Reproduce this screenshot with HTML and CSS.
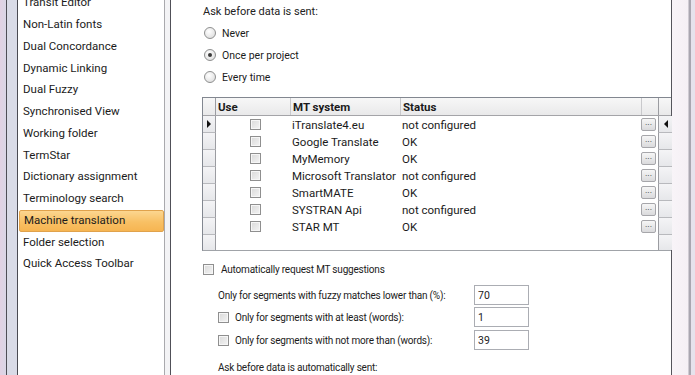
FILE: index.html
```html
<!DOCTYPE html>
<html lang="en">
<head>
  <meta charset="UTF-8" />
  <title>Options - Machine translation</title>
  <link rel="stylesheet" href="styles.css">
</head>
<body>
  <div class="window">
    <div class="frame-left"></div>
    <div class="gutter"></div>

    <div class="nav">
      <ul class="nav-list">
        <li>Transit Editor</li>
        <li>Non-Latin fonts</li>
        <li>Dual Concordance</li>
        <li>Dynamic Linking</li>
        <li>Dual Fuzzy</li>
        <li>Synchronised View</li>
        <li>Working folder</li>
        <li>TermStar</li>
        <li>Dictionary assignment</li>
        <li>Terminology search</li>
        <li class="active">Machine translation</li>
        <li>Folder selection</li>
        <li>Quick Access Toolbar</li>
      </ul>
    </div>

    <div class="nav-gap"></div>

    <div class="panel">
      <div class="label">Ask before data is sent:</div>
      <div class="radios">
        <label class="radio"><span class="radio-box"></span>Never</label>
        <label class="radio"><span class="radio-box checked"></span>Once per project</label>
        <label class="radio"><span class="radio-box"></span>Every time</label>
      </div>

      <div class="grid">
        <div class="grid-row grid-head">
          <div class="row-head"></div>
          <div class="cell">Use</div>
          <div class="cell sep">MT system</div>
          <div class="cell sep">Status</div>
          <div class="cell sep"></div>
          <div class="row-tail"></div>
        </div>

        <div class="grid-row">
          <div class="row-head current"></div>
          <div class="cell center"><span class="check"></span></div>
          <div class="cell">iTranslate4.eu</div>
          <div class="cell">not configured</div>
          <div class="cell"><span class="dots">...</span></div>
          <div class="row-tail current"></div>
        </div>
        <div class="grid-row">
          <div class="row-head"></div>
          <div class="cell center"><span class="check"></span></div>
          <div class="cell">Google Translate</div>
          <div class="cell">OK</div>
          <div class="cell"><span class="dots">...</span></div>
          <div class="row-tail"></div>
        </div>
        <div class="grid-row">
          <div class="row-head"></div>
          <div class="cell center"><span class="check"></span></div>
          <div class="cell">MyMemory</div>
          <div class="cell">OK</div>
          <div class="cell"><span class="dots">...</span></div>
          <div class="row-tail"></div>
        </div>
        <div class="grid-row">
          <div class="row-head"></div>
          <div class="cell center"><span class="check"></span></div>
          <div class="cell">Microsoft Translator</div>
          <div class="cell">not configured</div>
          <div class="cell"><span class="dots">...</span></div>
          <div class="row-tail"></div>
        </div>
        <div class="grid-row">
          <div class="row-head"></div>
          <div class="cell center"><span class="check"></span></div>
          <div class="cell">SmartMATE</div>
          <div class="cell">OK</div>
          <div class="cell"><span class="dots">...</span></div>
          <div class="row-tail"></div>
        </div>
        <div class="grid-row">
          <div class="row-head"></div>
          <div class="cell center"><span class="check"></span></div>
          <div class="cell">SYSTRAN Api</div>
          <div class="cell">not configured</div>
          <div class="cell"><span class="dots">...</span></div>
          <div class="row-tail"></div>
        </div>
        <div class="grid-row">
          <div class="row-head"></div>
          <div class="cell center"><span class="check"></span></div>
          <div class="cell">STAR MT</div>
          <div class="cell">OK</div>
          <div class="cell"><span class="dots">...</span></div>
          <div class="row-tail"></div>
        </div>

        <div class="grid-row grid-fill">
          <div class="row-head"></div>
          <div class="cell"></div>
          <div class="cell"></div>
          <div class="cell"></div>
          <div class="cell"></div>
          <div class="row-tail"></div>
        </div>
      </div>

      <label class="auto"><span class="check"></span>Automatically request MT suggestions</label>

      <div class="opt-row fuzzy">
        <span class="opt-text">Only for segments with fuzzy matches lower than (%):</span>
        <input class="field" type="text" value="70" readonly>
      </div>
      <div class="opt-row words">
        <label class="opt-text"><span class="check"></span>Only for segments with at least (words):</label>
        <input class="field" type="text" value="1" readonly>
      </div>
      <div class="opt-row most">
        <label class="opt-text"><span class="check"></span>Only for segments with not more than (words):</label>
        <input class="field" type="text" value="39" readonly>
      </div>

      <div class="label sub">Ask before data is automatically sent:</div>
    </div>

    <div class="frame-right"></div>
  </div>
</body>
</html>
```

FILE: styles.css
```css
body {
  margin: 0;
  font-family: Roboto, "Liberation Sans", Arial, sans-serif;
  color: #1b1b1b;
  background: #fff;
}
.window {
  display: flex;
  height: 375px;
  width: 695px;
  overflow: hidden;
}
.frame-left {
  width: 6px;
  background: linear-gradient(90deg, #e2d2e4, #d9d6e6);
  border-right: 1px solid #4e4e56;
}
.gutter {
  width: 10px;
  background: #d9dbe7;
  border-right: 1px solid #4a4a52;
}
.nav {
  width: 146px;
  background: #fff;
  border-right: 1px solid #a9a9ad;
}
.nav-list {
  list-style: none;
  margin: -7.6px 0 0;
  padding: 0;
  font-size: 11.5px;
}
.nav-list li {
  height: 21.75px;
  line-height: 21.75px;
  padding-left: 5px;
  white-space: nowrap;
}
.nav-list li.active {
  box-sizing: border-box;
  margin: 0 0 0 1px;
  padding-left: 4px;
  border: 1px solid #e0a24c;
  border-radius: 2px;
  line-height: 19.75px;
  background: linear-gradient(180deg, #fcd690, #f8c064 55%, #f6b552);
}
.nav-gap {
  width: 5px;
  background: #f3f3f5;
  border-right: 1px solid #505058;
}
.panel {
  width: 501px;
  padding-left: 31px;
  box-sizing: border-box;
  display: flex;
  flex-direction: column;
  border-right: 1px solid #55555c;
  font-size: 10px;
  letter-spacing: -0.2px;
}
.panel > * {
  flex: none;
}
.label {
  height: 22px;
  line-height: 22px;
  padding: 1px 0 0 1px;
  box-sizing: border-box;
  color: #222;
  font-size: 11px;
  letter-spacing: 0;
}
.radio {
  display: flex;
  align-items: center;
  height: 22px;
  padding-left: 2px;
  font-size: 10.5px;
  letter-spacing: 0;
}
.radio-box {
  box-sizing: border-box;
  width: 12px;
  height: 12px;
  margin-right: 6px;
  border: 1px solid #8e8f8f;
  border-radius: 50%;
  background: radial-gradient(circle at 40% 35%, #ffffff, #e3e3e3 70%, #d4d4d4);
  display: flex;
  align-items: center;
  justify-content: center;
}
.radio-box.checked::after {
  content: "";
  width: 4px;
  height: 4px;
  border-radius: 50%;
  background: #3a3a3a;
}
.check {
  display: inline-block;
  box-sizing: border-box;
  width: 11px;
  height: 11px;
  border: 1px solid #8f8f8f;
  background: linear-gradient(135deg, #d9d9d9, #f4f4f4);
  box-shadow: inset 0 0 0 1px #f6f6f6;
  flex: none;
}
.grid {
  margin-top: 9px;
  height: 154px;
  box-sizing: border-box;
  border-top: 1px solid #828790;
  border-left: 1px solid #828790;
  border-bottom: 1px solid #a0a3a8;
  display: flex;
  flex-direction: column;
  font-size: 11.5px;
  letter-spacing: 0;
}
.grid-row {
  display: grid;
  grid-template-columns: 13px 74px 110px 241px 17px 14px;
  height: 17px;
  flex: none;
}
.grid-head {
  height: 18px;
  font-weight: bold;
  background: linear-gradient(180deg, #f7f7f7, #e9e9ea);
  border-bottom: 1px solid #a4a4a8;
  box-sizing: border-box;
}
.grid-fill {
  flex: 1;
}
.cell {
  display: flex;
  align-items: center;
  padding-left: 2px;
  white-space: nowrap;
  overflow: hidden;
}
.cell.center {
  justify-content: center;
  padding-left: 4px;
}
.grid-head .cell.sep {
  border-left: 1px solid #c9c9cc;
}
.row-head,
.row-tail {
  box-sizing: border-box;
  background: linear-gradient(180deg, #f4f4f6, #e6e7ea);
  border-bottom: 1px solid #b8b9bd;
  display: flex;
  align-items: center;
  justify-content: center;
}
.row-head {
  border-right: 1px solid #9b9ca1;
}
.row-tail {
  border-left: 1px solid #9b9ca1;
}
.grid-head .row-head,
.grid-head .row-tail {
  background: none;
  border-bottom: none;
}
.grid-fill .row-head,
.grid-fill .row-tail {
  border-bottom: none;
}
.row-head.current::after {
  content: "";
  border-left: 4px solid #111;
  border-top: 4px solid transparent;
  border-bottom: 4px solid transparent;
}
.row-tail.current::after {
  content: "";
  border-right: 4px solid #111;
  border-top: 4px solid transparent;
  border-bottom: 4px solid transparent;
}
.dots {
  box-sizing: border-box;
  width: 15px;
  height: 13px;
  border: 1px solid #a6a6aa;
  border-radius: 2px;
  background: linear-gradient(180deg, #f6f6f6, #dadadc);
  font-size: 9px;
  line-height: 6px;
  text-align: center;
  color: #333;
}
.grid-row .cell:nth-child(5) {
  padding-left: 0;
}
.auto {
  display: flex;
  align-items: center;
  gap: 7px;
  height: 20px;
  margin-top: 8px;
  padding-left: 1px;
}
.opt-row {
  display: grid;
  grid-template-columns: 256px 55px;
  height: 20px;
  padding-left: 16px;
  align-items: center;
}
.fuzzy {
  margin-top: 6px;
}
.words {
  margin-top: 2px;
}
.most {
  margin-top: 3px;
}
.opt-text {
  display: flex;
  align-items: center;
  gap: 6px;
  white-space: nowrap;
}
.field {
  box-sizing: border-box;
  width: 55px;
  height: 20px;
  border: 1px solid #abadb3;
  padding: 0 3px;
  font: inherit;
  font-size: 10.5px;
  color: #222;
  outline: none;
}
.sub {
  margin-top: 6px;
  padding-left: 16px;
  font-size: 10px;
  letter-spacing: -0.2px;
}
.frame-right {
  flex: 1;
  background: linear-gradient(90deg, #f8f4f8 0, #f5f0f5 16px, #a9a6b0 17px, #a9a6b0 19px, #e6e2ec 19px);
}
```
